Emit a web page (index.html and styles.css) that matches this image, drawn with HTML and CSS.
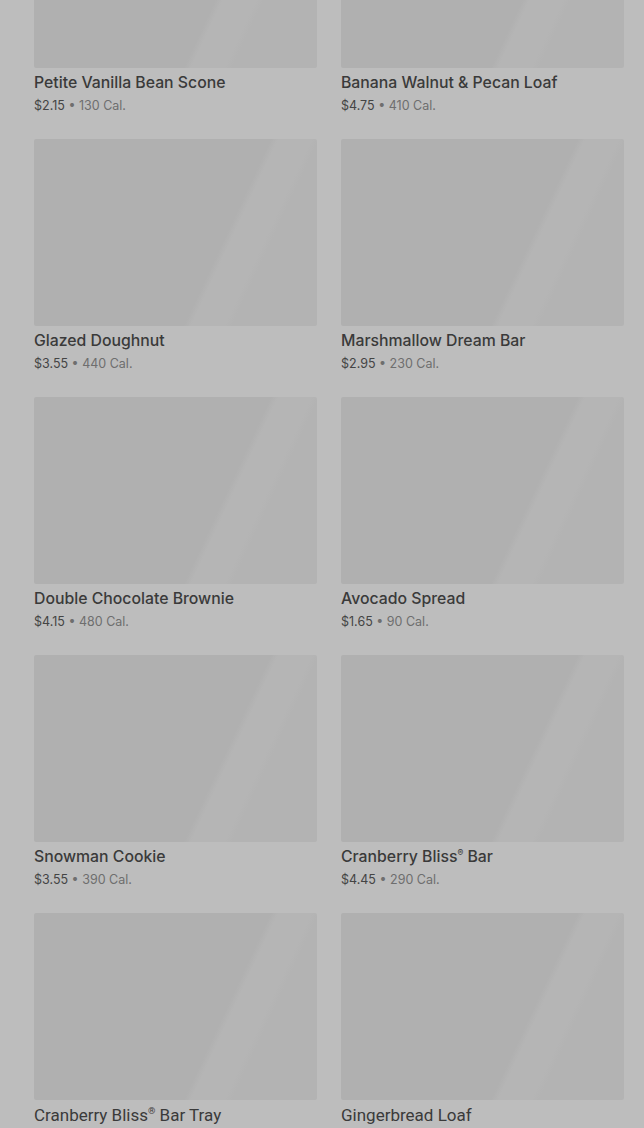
FILE: index.html
```html
<!DOCTYPE html>
<html lang="en">
<head>
    <meta charset="UTF-8">
    <meta name="viewport" content="width=device-width, initial-scale=1.0">
    <title>Bakery</title>
    <link rel="stylesheet" href="styles.css">
</head>
<body>

    <div class="menu-grid">
        <!-- Row 1 -->
        <div class="product">
            <div class="product-image"></div>
            <div class="product-name">Petite Vanilla Bean Scone</div>
            <div class="product-info"><span class="price">$2.15</span> <span class="cal">• 130 Cal.</span></div>
        </div>
        <div class="product">
            <div class="product-image"></div>
            <div class="product-name">Banana Walnut &amp; Pecan Loaf</div>
            <div class="product-info"><span class="price">$4.75</span> <span class="cal">• 410 Cal.</span></div>
        </div>

        <!-- Row 2 -->
        <div class="product">
            <div class="product-image"></div>
            <div class="product-name">Glazed Doughnut</div>
            <div class="product-info"><span class="price">$3.55</span> <span class="cal">• 440 Cal.</span></div>
        </div>
        <div class="product">
            <div class="product-image"></div>
            <div class="product-name">Marshmallow Dream Bar</div>
            <div class="product-info"><span class="price">$2.95</span> <span class="cal">• 230 Cal.</span></div>
        </div>

        <!-- Row 3 -->
        <div class="product">
            <div class="product-image"></div>
            <div class="product-name">Double Chocolate Brownie</div>
            <div class="product-info"><span class="price">$4.15</span> <span class="cal">• 480 Cal.</span></div>
        </div>
        <div class="product">
            <div class="product-image"></div>
            <div class="product-name">Avocado Spread</div>
            <div class="product-info"><span class="price">$1.65</span> <span class="cal">• 90 Cal.</span></div>
        </div>

        <!-- Row 4 -->
        <div class="product">
            <div class="product-image"></div>
            <div class="product-name">Snowman Cookie</div>
            <div class="product-info"><span class="price">$3.55</span> <span class="cal">• 390 Cal.</span></div>
        </div>
        <div class="product">
            <div class="product-image"></div>
            <div class="product-name">Cranberry Bliss<sup>®</sup> Bar</div>
            <div class="product-info"><span class="price">$4.45</span> <span class="cal">• 290 Cal.</span></div>
        </div>

        <!-- Row 5 (still loading) -->
        <div class="product">
            <div class="product-image"></div>
            <div class="product-name loading">Cranberry Bliss<sup>®</sup> Bar Tray</div>
        </div>
        <div class="product">
            <div class="product-image"></div>
            <div class="product-name loading">Gingerbread Loaf</div>
        </div>
    </div>

</body>
</html>
```

FILE: styles.css
```css
body {
    margin: 0;
    height: 100vh;
    background-color: #bdbdbd;
    font-family: Inter, "Open Sans", Arial, sans-serif;
    color: #3b3b3b;
    overflow: hidden;
}

.menu-grid {
    display: grid;
    grid-template-columns: 283px 283px;
    column-gap: 24px;
    row-gap: 24px;
    padding: 0 20px 0 34px;
    margin-top: -119px;
}

.product-image {
    height: 187px;
    border-radius: 2px;
    background: linear-gradient(115deg, #b0b0b0 0%, #b0b0b0 64%, #b5b5b5 66%, #b5b5b5 75%, #b3b3b3 77%, #b3b3b3 100%);
}

.product-name {
    margin-top: 5px;
    font-size: 15.8px;
    font-weight: 500;
    line-height: 20px;
    color: #3a3a3a;
    white-space: nowrap;
}

.product-name sup {
    font-size: 0.55em;
    line-height: 0;
}

.product-name.loading {
    font-family: Roboto, Arial, sans-serif;
    font-weight: 400;
    font-size: 17px;
}

.product-info {
    margin-top: 4px;
    font-size: 12.5px;
    line-height: 18px;
}

.price {
    color: #444444;
}

.cal {
    color: #6e6e6e;
}
```
